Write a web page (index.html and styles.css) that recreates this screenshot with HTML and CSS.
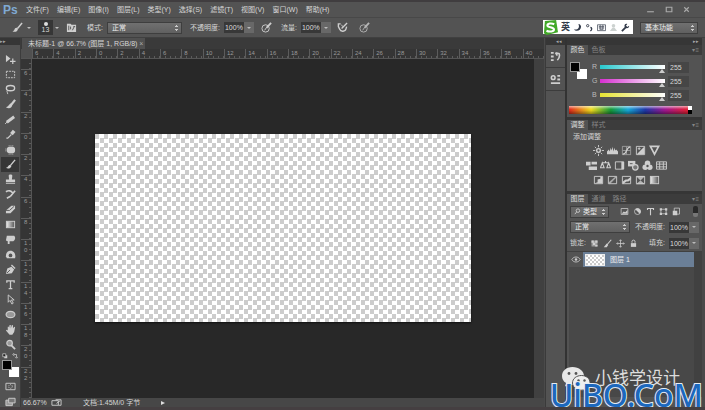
FILE: index.html
```html
<!DOCTYPE html>
<html lang="zh-CN">

<head>
    <meta charset="UTF-8">
    <meta name="viewport" content="width=device-width, initial-scale=1.0">
    <title>未标题-1 @ 66.7%</title>
    <link rel="stylesheet" href="styles.css">
</head>

<body>

    <header class="menubar">
        <span class="logo">Ps</span>
        <nav class="menus">
            <button>文件(F)</button>
            <button>编辑(E)</button>
            <button>图像(I)</button>
            <button>图层(L)</button>
            <button>类型(Y)</button>
            <button>选择(S)</button>
            <button>滤镜(T)</button>
            <button>视图(V)</button>
            <button>窗口(W)</button>
            <button>帮助(H)</button>
        </nav>
        <div class="window-buttons">
            <button aria-label="最小化"><svg viewBox="0 0 8 8"><path d="M1 6h6" /></svg></button>
            <button aria-label="最大化"><svg viewBox="0 0 8 8"><path d="M2 2h5v4H2z" /></svg></button>
            <button aria-label="关闭"><svg viewBox="0 0 8 8"><path d="M2 2l4 4M6 2L2 6" /></svg></button>
        </div>
    </header>

    <div class="options">
        <button class="current-tool" aria-label="画笔工具"><svg class="icon" viewBox="0 0 12 12"><path d="M11 1L6 7" stroke-width="1.6" /><path class="solid" d="M6 6.5c-2-.5-3 .5-3.400 2C2.300 9.500 1.500 10 .5 10c2 1.200 5.500 1 6-2.500z" /></svg><i class="arrow"></i></button>
        <button class="brush-size" aria-label="画笔大小"><i class="dot"></i>13</button>
        <i class="arrow"></i>
        <button class="brush-panel" aria-label="画笔面板"><svg class="icon" viewBox="0 0 12 12"><path class="solid" d="M1 2h4l1 1h5v8H1z" /><path class="cut" d="M3 4v5M5 5v3M7 9l2-4M8 5h2" /></svg></button>
        <label class="mode-label" for="mode">模式:</label>
        <select id="mode" class="mode">
            <option>正常</option>
        </select>
        <label for="opacity">不透明度:</label>
        <span class="number"><input id="opacity" value="100%"><button aria-label="不透明度滑块"><i class="arrow"></i></button></span>
        <button class="pressure" aria-label="压力不透明度"><svg class="icon" viewBox="0 0 12 12"><circle cx="5" cy="7" r="4" /><path d="M11 1L6 6.500" stroke-width="2" /><path d="M6 6L4 9" /></svg></button>
        <label for="flow">流量:</label>
        <span class="number"><input id="flow" value="100%"><button aria-label="流量滑块"><i class="arrow"></i></button></span>
        <button class="airbrush" aria-label="喷枪"><svg class="icon" viewBox="0 0 12 12"><path d="M4 2H1.500v3L3 8c1 3 6 3 7-1l.5-2M11 1L5 7" stroke-width="1.500" /><path d="M5 3l1 2" /></svg></button>
        <button class="airbrush" aria-label="压力大小"><svg class="icon dim" viewBox="0 0 12 12"><circle cx="5" cy="7" r="4" /><path d="M11 1L6 6.500" stroke-width="2" /><path d="M6 6L4 9" /></svg></button>
        <select class="workspace-select" aria-label="工作区">
            <option>基本功能</option>
        </select>

        <div class="ime">
            <svg class="ime-logo" viewBox="0 0 16 16"><path d="M2 1l12-1 2 13-12 3L1 14z" fill="#42a928" /><path d="M12 4.500C9 3 4.500 3.500 4.700 6c.2 2 6.800 1.500 7 4 .2 2.500-5 3-8 1.500" fill="none" stroke="#fff" stroke-width="2.200" /></svg>
            <span>英</span>
            <svg viewBox="0 0 10 10"><path d="M6 1c2 4-1 7-5 6 2 3 8 2 8-3 0-1-1-3-3-3z" fill="#333b4a" /></svg>
            <svg viewBox="0 0 10 10"><circle cx="3" cy="3" r="1.300" fill="none" stroke="#333b4a" /><path d="M6 5c2 0 2 2 0 4" fill="none" stroke="#333b4a" stroke-width="1.400" /></svg>
            <svg viewBox="0 0 10 10"><path d="M.5 2h9v6.500h-9zM2 4h6M2 5.500h6M3 7h4M3.500 2v5M6.500 2v5" fill="none" stroke="#4c5360" stroke-width=".9" /></svg>
            <svg viewBox="0 0 10 10"><circle cx="5" cy="3" r="2" fill="#ccd2d0" /><path d="M4 5h2l3 4H1z" fill="#ccd2d0" /></svg>
            <svg viewBox="0 0 10 10"><path d="M1 9l5-5" stroke="#333b4a" stroke-width="2" /><path d="M9 3L7 4.500 5.500 3 7 1C4 .5 3 3 4.500 5c2 1.500 5 .5 4.500-2z" fill="#333b4a" /></svg>
        </div>
    </div>

    <main class="workspace">

        <aside class="tools">
            <div class="grip">▸▸</div>
            <div class="tool-list">
                <button aria-label="移动"><svg class="icon" viewBox="0 0 12 12"><path class="solid" d="M1 1l5 4-5 4z" /><path d="M8.500 5v6M5.500 8h6" stroke-width="1.300" /></svg></button>
                <button aria-label="矩形选框"><svg class="icon" viewBox="0 0 12 12"><path d="M1.500 2.500h9v7h-9z" stroke-dasharray="2 1" /></svg></button>
                <button aria-label="套索"><svg class="icon" viewBox="0 0 12 12"><ellipse cx="6" cy="4.500" rx="4.500" ry="2.800" stroke-width="1.500" /><path d="M3 7c-2 1 0 2 0 4" /></svg></button>
                <button aria-label="快速选择"><svg class="icon" viewBox="0 0 12 12"><path d="M11 1L7 6" stroke-width="2.400" /><path class="solid" d="M7 5C4 5 5 8 1 9c3 2 7 1 7-3z" /></svg></button>
                <button aria-label="裁剪"><svg class="icon" viewBox="0 0 12 12"><path d="M2 9l8-6" stroke-width="3.200" /><path d="M0 11l3-3" /></svg></button>
                <button aria-label="吸管"><svg class="icon" viewBox="0 0 12 12"><path d="M10 2L7 5.500" stroke-width="3.800" /><path d="M7 6L3 10H1.500" stroke-width="1.300" /></svg></button>
                <button aria-label="修复画笔"><svg class="icon" viewBox="0 0 12 12"><rect class="solid" x="2" y="3" width="9" height="7" rx="3" /><path d="M1 5v4M4 2h5M4 11h5" stroke-dasharray="1 1" /></svg></button>
                <button class="active" aria-label="画笔"><svg class="icon" viewBox="0 0 12 12"><path d="M11 1L6 7" stroke-width="1.500" /><path class="solid" d="M6 6.500C3 6 4 9 1 9.500c2 1.500 5 1 6-2z" /></svg></button>
                <button aria-label="仿制图章"><svg class="icon" viewBox="0 0 12 12"><path class="solid" d="M4 2c0-2 4-2 4 0L7.500 6H11v3H1V6h3.500zM1 10h10v1H1z" /></svg></button>
                <button aria-label="历史记录画笔"><svg class="icon" viewBox="0 0 12 12"><path d="M1 3c3-2 6-1 7 1M11 2L6 8M6 8l-4 2" stroke-width="1.800" /></svg></button>
                <button aria-label="橡皮擦"><svg class="icon" viewBox="0 0 12 12"><path class="solid" d="M1 7l6-5h4v3L6 10H1z" /><path class="cut" d="M1 7h4l5-4.500" /></svg></button>
                <button aria-label="渐变"><svg class="icon" viewBox="0 0 12 12"><defs><linearGradient id="fade"><stop stop-color="#eee" /><stop offset="1" stop-color="#555" /></linearGradient></defs><rect x="1.500" y="2.500" width="9" height="7" fill="url(#fade)" /></svg></button>
                <button aria-label="涂抹"><svg class="icon" viewBox="0 0 12 12"><path class="solid" d="M2 2h8c2 2 1 5-1 6H5v3H3V8L1 7z" /></svg></button>
                <button aria-label="海绵"><svg class="icon" viewBox="0 0 12 12"><path class="solid" d="M1 8c0-5 3-6 5-6 4 0 6 4 5 8H2z" /><circle class="hole" cx="6" cy="7" r="2" /></svg></button>
                <button aria-label="钢笔"><svg class="icon" viewBox="0 0 12 12"><path class="solid" d="M1 11l1.500-6L7 3l3 3-2.500 4z" /><path d="M7 1l4 4" stroke-width="1.500" /><path class="cut" d="M2 10l3.500-3.500" /></svg></button>
                <button aria-label="文字"><svg class="icon" viewBox="0 0 12 12"><path d="M2 4V2h8v2M6 2v8M4 10.500h4" stroke-width="1.400" /></svg></button>
                <button aria-label="路径选择"><svg class="icon" viewBox="0 0 12 12"><path d="M3.500 1v8l2-2 2 4 1.500-1-2-3.500H10z" /></svg></button>
                <button aria-label="椭圆"><svg class="icon" viewBox="0 0 12 12"><ellipse cx="6" cy="6" rx="4.800" ry="3.500" fill="#999" stroke-width="1.300" /></svg></button>
                <button aria-label="抓手"><svg class="icon" viewBox="0 0 12 12"><path class="solid" d="M3 7V3h1.300v2L5 1h1.300v4L7.500 1l1.200.3V5l1.300-2 1 .6-1 5-2 3H5L1 7l1-.8z" /></svg></button>
                <button aria-label="缩放"><svg class="icon" viewBox="0 0 12 12"><circle cx="5" cy="4.500" r="3" fill="#999" stroke-width="1.300" /><path d="M7 7l4 4" stroke-width="2" /></svg></button>
            </div>
            <div class="swap">
                <svg class="icon" viewBox="0 0 8 8"><path class="solid" d="M3 3h4v4H3z" /><path d="M1 1h4v4H1z" fill="#222" /></svg>
                <svg class="icon" viewBox="0 0 8 8"><path d="M2 2h4v4M3 0L1 2l2 2M4 5l2 2 2-2" /></svg>
            </div>
            <div class="swatches"><i class="back"></i><i class="front"></i></div>
            <button class="mask" aria-label="快速蒙版"><svg class="icon" viewBox="0 0 12 12"><path d="M1 2.500h10v7H1z" /><circle cx="6" cy="6" r="2" stroke-dasharray="1 1" /></svg></button>
            <button class="mask" aria-label="屏幕模式"><svg class="icon" viewBox="0 0 12 12"><path d="M1 4.500h7v6H1z" fill="#999" /><path d="M4 2.500h7v5H4z" fill="#777" /></svg></button>
        </aside>

        <section class="document">
            <div class="tabs">
                <div class="tab">未标题-1 @ 66.7% (图层 1, RGB/8) <button aria-label="关闭文档">×</button></div>
            </div>
            <div class="ruler-row">
                <i class="corner"></i>
                <div class="ruler-x">
                    <span>6</span><span>4</span><span>2</span><span>0</span><span>2</span><span>4</span><span>6</span><span>8</span><span>10</span><span>12</span><span>14</span><span>16</span><span>18</span><span>20</span><span>22</span><span>24</span><span>26</span><span>28</span><span>30</span><span>32</span><span>34</span><span>36</span><span>38</span><span>40</span>
                </div>
            </div>
            <div class="view">
                <div class="ruler-y">
                    <span class="part"></span><span>6</span><span>4</span><span>2</span><span>0</span><span>2</span><span>4</span><span>6</span><span>8</span><span>1<br>0</span><span>1<br>2</span><span>1<br>4</span><span>1<br>6</span><span>1<br>8</span><span>2<br>0</span><span>2<br>2</span><span class="part"></span>
                </div>
                <div class="stage">
                    <div class="canvas"></div>
                </div>
                <div class="scroll"></div>
            </div>
            <footer class="status">
                <span class="zoom">66.67%</span>
                <svg class="icon" viewBox="0 0 12 8"><path d="M1 2h7v5H1zM5 1h6v6H8" /><path d="M6 5l4-3" /></svg>
                <span class="info">文档:1.45M/0 字节</span>
                <i class="play"></i>
            </footer>
        </section>

        <aside class="dock">
            <div class="grip">◂◂</div>
            <button aria-label="历史记录"><svg class="icon" viewBox="0 0 12 12"><path class="solid" d="M1 1h3v2H1zM1 5h3v2H1zM1 9h3v2H1z" /><path d="M6 2l4 1c1 3 0 5-2 7M6 2l2 3" stroke-width="1.700" /></svg></button>
            <button aria-label="属性"><svg class="icon" viewBox="0 0 12 12"><circle cx="3.500" cy="4" r="2" stroke-width="1.700" /><path class="solid" d="M8 1h3v2H8zM8 5h3v2H8zM1 9h10v2H1z" /></svg></button>
        </aside>

        <aside class="panels">
            <div class="grip">▸▸</div>

            <section class="panel color">
                <div class="panel-tabs"><button class="on">颜色</button><button>色板</button><i class="flyout">▾≡</i></div>
                <div class="color-body">
                    <div class="swatches"><i class="back"></i><i class="front"></i></div>
                    <div class="channels">
                        <div class="channel"><label for="red">R</label><input id="red" class="cyan" type="range" max="255" value="255"><input class="value" aria-label="R 值" value="255"></div>
                        <div class="channel"><label for="green">G</label><input id="green" class="magenta" type="range" max="255" value="255"><input class="value" aria-label="G 值" value="255"></div>
                        <div class="channel"><label for="blue">B</label><input id="blue" class="yellow" type="range" max="255" value="255"><input class="value" aria-label="B 值" value="255"></div>
                    </div>
                </div>
                <div class="spectrum"><i></i></div>
            </section>

            <section class="panel adjust">
                <div class="panel-tabs"><button class="on">调整</button><button>样式</button><i class="flyout">▾≡</i></div>
                <p>添加调整</p>
                <div class="adjust-row">
                    <svg class="icon" viewBox="0 0 12 12"><circle cx="6" cy="6" r="2" stroke-width="1.500" /><path d="M6 0v2.500M6 9.500V12M0 6h2.500M9.500 6H12M2 2l1.500 1.500M8.500 8.500L10 10M10 2L8.500 3.500M3.500 8.500L2 10" /></svg>
                    <svg class="icon" viewBox="0 0 12 12"><path class="solid" d="M0 10V7l2-2 1 2 1-4 1 3 1-4 1 5 1-4 1 3 1-1 2 2v3z" /></svg>
                    <svg class="icon" viewBox="0 0 12 12"><path d="M1.500 1.500h9v9h-9zM2 6h8M6 2v8" opacity=".6" /><path d="M2 10c5 0 3-7 8-8" stroke-width="1.300" /></svg>
                    <svg class="icon" viewBox="0 0 12 12"><path d="M1.500 1.500h9v9h-9z" /><path class="solid" d="M2 10l8-8v8z" /><path d="M3 4h3M4.500 2.500v3" /></svg>
                    <svg class="icon" viewBox="0 0 12 12"><path d="M1.500 1.500h9L6 10z" stroke-width="1.800" /></svg>
                </div>
                <div class="adjust-row">
                    <svg class="icon" viewBox="0 0 12 12"><path class="solid" d="M0 2h5v4H0zM6 2h6v3H6zM3 7h9v4H3z" /></svg>
                    <svg class="icon" viewBox="0 0 12 12"><path d="M2 3h8M6 1v2M2.500 3L.5 8.500h4zM9.500 3l-2 5.500h4z" stroke-width="1.200" /></svg>
                    <svg class="icon" viewBox="0 0 12 12"><path d="M1.500 2h9v8h-9z" /><path class="solid" d="M8 2h3v8H8z" /></svg>
                    <svg class="icon" viewBox="0 0 12 12"><path class="solid" d="M0 1h8v6H0z" /><circle cx="8" cy="8" r="3" fill="#777" stroke-width="1.300" /><path class="cut" d="M2 4h3" /></svg>
                    <svg class="icon" viewBox="0 0 12 12"><circle class="solid" cx="6" cy="3.500" r="3" /><circle class="solid" cx="3.500" cy="8" r="3" /><circle class="solid" cx="8.500" cy="8" r="3" /><circle class="hole" cx="6" cy="6.500" r="1.300" /></svg>
                    <svg class="icon" viewBox="0 0 12 12"><path d="M.5 2h11v8H.5zM.5 4.500h11M.5 7.500h11M4 2v8M8 2v8" /></svg>
                </div>
                <div class="adjust-row">
                    <svg class="icon" viewBox="0 0 12 12"><path d="M1.500 1.500h9v8h-9z" /><path class="solid" d="M2 9l3-1V5l3-1V2h2v7z" /></svg>
                    <svg class="icon" viewBox="0 0 12 12"><path d="M1.500 1.500h9v8h-9z" /><path class="solid" d="M2 8l7-6h2L3 10z" opacity=".7" /></svg>
                    <svg class="icon" viewBox="0 0 12 12"><path d="M1.500 1.500h9v8h-9z" /><path class="solid" d="M2 7l3-2h2l4-3v3L8 7H6l-4 3z" /></svg>
                    <svg class="icon" viewBox="0 0 12 12"><path d="M1.500 1.500h9v8h-9z" /><path class="solid" d="M1 1h10L6 6zM1 10l5-4 5 4z" opacity=".8" /></svg>
                    <svg class="icon" viewBox="0 0 12 12"><rect x="1.500" y="1.500" width="9" height="8" fill="url(#fade)" /></svg>
                </div>
            </section>

            <section class="panel layers">
                <div class="panel-tabs"><button class="on">图层</button><button>通道</button><button>路径</button><i class="flyout">▾≡</i></div>
                <div class="layer-row filter">
                    <span class="kind"><svg class="icon" viewBox="0 0 8 8"><circle cx="4.500" cy="3" r="2" /><path d="M3 4.500L1 7" /></svg><select aria-label="图层过滤">
                            <option>类型</option>
                        </select></span>
                    <div class="filter-icons">
                        <svg class="icon" viewBox="0 0 12 12"><path d="M1.500 2h9v8h-9z" /><path class="solid" d="M2 9l3-3 2 1 3-3v5z" /></svg>
                        <svg class="icon" viewBox="0 0 12 12"><circle cx="6" cy="6" r="4" /><path class="solid" d="M3 3a4 4 0 0 1 6 6z" /></svg>
                        <svg class="icon" viewBox="0 0 12 12"><path d="M2 4V2h8v2M6 2v9" stroke-width="1.500" /></svg>
                        <svg class="icon" viewBox="0 0 12 12"><path d="M2.500 3h7v6h-7z" /><path class="solid" d="M1 1.500h3v3H1zM8 1.500h3v3H8zM1 7.500h3v3H1zM8 7.500h3v3H8z" /></svg>
                        <svg class="icon" viewBox="0 0 12 12"><path d="M3 1.500h7v8H3z" /><path class="solid" d="M1 5h6v6H1z" /></svg>
                    </div>
                    <i class="switch"></i>
                </div>
                <div class="layer-row blend-row">
                    <select class="blend" aria-label="混合模式">
                        <option>正常</option>
                    </select>
                    <label for="layer-opacity">不透明度:</label>
                    <span class="number"><input id="layer-opacity" value="100%"><button aria-label="图层不透明度滑块"><i class="arrow"></i></button></span>
                </div>
                <div class="layer-row lock-row">
                    <span>锁定:</span>
                    <div class="lock-icons">
                        <svg class="icon" viewBox="0 0 12 12"><path class="solid" d="M2 2h8v8H2z" opacity=".6" /><path class="solid" d="M2 2h3v3H2zM7 2h3v3H7zM4 5h3v3H4zM7 8h3v2H7z" /></svg>
                        <svg class="icon" viewBox="0 0 12 12"><path d="M11 1L5 8" stroke-width="1.500" /><path class="solid" d="M5 6l2 2-2 3H1z" /></svg>
                        <svg class="icon" viewBox="0 0 12 12"><path d="M6 1v10M1 6h10M4.500 2.500L6 1l1.500 1.500M4.500 9.500L6 11l1.500-1.500M2.500 4.500L1 6l1.500 1.500M9.500 4.500L11 6 9.500 7.500" /></svg>
                        <svg class="icon" viewBox="0 0 12 12"><path class="solid" d="M2.500 5.500h7v5h-7z" /><path d="M4 5V3c0-2 4-2 4 0v2" stroke-width="1.300" /></svg>
                    </div>
                    <label for="fill">填充:</label>
                    <span class="number"><input id="fill" value="100%"><button aria-label="填充滑块"><i class="arrow"></i></button></span>
                </div>
                <div class="layer-list">
                    <div class="layer-items">
                        <div class="layer">
                            <svg class="icon eye" viewBox="0 0 12 12"><path d="M1 6c2-4 8-4 10 0-2 4-8 4-10 0z" /><circle class="solid" cx="6" cy="6" r="1.500" /></svg>
                            <i class="thumb"></i>
                            <span>图层 1</span>
                        </div>
                    </div>
                    <div class="list-scroll"></div>
                </div>
                <div class="panel-foot"></div>
            </section>
        </aside>
    </main>

    <div class="account">
        <svg viewBox="0 0 30 26"><path d="M11.500 1C5 1 1 5 1 10c0 3 1.500 5.500 4 7l-1 3.500L8 18.500c8 1 15-2 15-8.500 0-5-5-9-11.500-9z" fill="#e8e8e8" /><circle cx="8" cy="7.500" r="1.400" fill="#555" /><circle cx="15" cy="7.500" r="1.400" fill="#555" /><path d="M20.500 9.500c-5 0-9 3-9 7.500s5 8 11 7l3.500 1.500-1-3c2.500-1.500 4-3 4-6 0-4-4-7-8.500-7z" fill="#eee" stroke="#555" /><circle cx="17.500" cy="14.500" r="1.200" fill="#555" /><circle cx="23.500" cy="14.500" r="1.200" fill="#555" /></svg>
        <span>小钱学设计</span>
    </div>
    <div class="site">UiBQ.CoM</div>

</body>

</html>
```
FILE: styles.css
```css
* {
    box-sizing: border-box;
}

body,
html {
    height: 100%;
    margin: 0;
}

body {
    display: flex;
    flex-direction: column;
    position: relative;
    overflow: hidden;
    background: #535353;
    border-top: 2px solid #403d3f;
    border-bottom: 3px solid #453f41;
    color: #d6d6d6;
    font-family: "Liberation Sans", "Noto Sans CJK SC", sans-serif;
    font-size: 7px;
    line-height: 10px;
}

button,
input,
select {
    margin: 0;
    padding: 0;
    border: 0;
    border-radius: 0;
    background: none;
    color: inherit;
    font: inherit;
    appearance: none;
}

button {
    white-space: nowrap;
}

svg {
    display: block;
    flex: none;
}

.icon {
    width: 11px;
    height: 11px;
    fill: none;
    stroke: #cecece;
}

.icon .solid {
    fill: #cecece;
    stroke: none;
}

.icon .hole {
    fill: #535353;
    stroke: none;
}

.icon .cut {
    stroke: #535353;
}

.dim {
    opacity: 0.8;
}

.arrow {
    display: block;
    flex: none;
    border: 2px solid transparent;
    border-top-color: #bbb;
    border-bottom: 0;
}

select {
    height: 12px;
    padding: 0 4px;
    border: 1px solid #3e3e3e;
    /* two small triangles at the right end */
    background:
        conic-gradient(from 135deg at 50% 0, #ccc 90deg, transparent 0) right 3px top 2px / 3px 2px no-repeat,
        conic-gradient(from -45deg at 50% 100%, #ccc 90deg, transparent 0) right 3px bottom 2px / 3px 2px no-repeat,
        linear-gradient(#707070, #606060);
    color: #eee;
}

/* menu bar */

.menubar {
    display: flex;
    align-items: center;
    flex: none;
    height: 16px;
    padding: 0 14px 0 3px;
    border-bottom: 1px solid #484848;
}

.logo {
    width: 22px;
    color: #80aad4;
    font-size: 12px;
    font-weight: bold;
}

.menus {
    display: flex;
    flex: 1;
    gap: 8px;
    padding-left: 1px;
}

.window-buttons {
    display: flex;
    gap: 9px;
}

.window-buttons svg {
    width: 9px;
    height: 9px;
    fill: none;
    stroke: #aaa;
}

/* options bar */

.options {
    display: flex;
    align-items: center;
    flex: none;
    position: relative;
    height: 20px;
    padding: 0 7px 0 12px;
    border-bottom: 1px solid #404040;
}

.current-tool {
    display: flex;
    align-items: center;
    gap: 4px;
    margin-right: 7px;
}

.brush-size {
    width: 15px;
    height: 15px;
    margin-right: 2px;
    background: #363636;
    line-height: 7px;
}

.dot {
    display: block;
    width: 4px;
    height: 4px;
    margin: 0 auto;
    border-radius: 50%;
    background: #ddd;
}

.brush-panel {
    margin: 0 10px 0 7px;
}

.mode {
    width: 75px;
    margin: 0 8px 0 4px;
}

.number {
    display: flex;
    margin-left: 4px;
}

.number input {
    width: 20px;
    height: 11px;
    background: #383838;
    color: #ddd;
    text-align: center;
}

.number button {
    display: flex;
    align-items: center;
    justify-content: center;
    width: 10px;
    background: #686868;
}

.pressure {
    margin: 0 9px 0 7px;
}

.airbrush {
    margin-left: 6px;
    margin-right: 5px;
}

.workspace-select {
    width: 58px;
    margin-left: auto;
}

.ime {
    display: flex;
    align-items: center;
    justify-content: space-between;
    position: absolute;
    right: 72px;
    top: 2px;
    width: 90px;
    height: 14px;
    padding-right: 3px;
    background: #fff;
    color: #333b4a;
    font-size: 9px;
    font-weight: bold;
}

.ime svg {
    width: 9px;
    height: 9px;
}

.ime .ime-logo {
    width: 15px;
    height: 15px;
}

/* work area */

.workspace {
    display: flex;
    flex: 1;
    min-height: 0;
    padding-right: 3px;
    background: #4a4a4a;
}

.grip {
    flex: none;
    height: 7px;
    background: #363636;
    color: #aaa;
    font-size: 5px;
    line-height: 7px;
    text-align: right;
    padding-right: 3px;
}

.tools {
    display: flex;
    flex-direction: column;
    align-items: center;
    flex: none;
    width: 21px;
    background: #535353;
    border-right: 1px solid #3c3c3c;
}

.tools .grip {
    align-self: stretch;
    text-align: left;
}

.tool-list {
    display: flex;
    flex-direction: column;
    padding-top: 7px;
}

.tool-list button {
    display: flex;
    align-items: center;
    justify-content: center;
    width: 18px;
    height: 15px;
}

.tool-list .active {
    background: #363636;
}

.swap {
    display: flex;
    gap: 4px;
}

.swap .icon {
    width: 6px;
    height: 8px;
}

.swatches {
    display: grid;
    flex: none;
    width: 17px;
    height: 17px;
}

.swatches i {
    grid-area: 1 / 1;
    width: 10px;
    height: 10px;
}

.front {
    border: 1px solid #999;
    background: #000;
}

.back {
    align-self: end;
    justify-self: end;
    background: #fff;
}

.mask {
    margin-top: 4px;
}

/* document window */

.document {
    display: flex;
    flex-direction: column;
    flex: 1;
    min-width: 0;
    background: #3a3a3a;
}

.tabs {
    display: flex;
    flex: none;
    height: 11px;
    padding-left: 1px;
}

.tab {
    padding: 0 2px 0 6px;
    background: #505050;
    line-height: 11px;
    white-space: nowrap;
}

.tab button {
    color: #aaa;
}

.ruler-row {
    display: flex;
    flex: none;
    height: 10px;
    color: #999;
    border-bottom: 1px solid #555;
}

.corner {
    flex: none;
    width: 11px;
    background: #505050;
}

.ruler-x {
    display: flex;
    flex: 1;
    background: #353535;
}

.ruler-x span {
    flex: 1;
    min-width: 0;
    padding-left: 2px;
    border-left: 1px solid #5c5c5c;
    font-size: 6px;
    line-height: 8px;
    /* minor ticks */
    background: repeating-linear-gradient(90deg, transparent 0 4px, #5c5c5c 4px 5px) bottom / 100% 2px no-repeat;
}

.view {
    display: flex;
    flex: 1;
    min-height: 0;
}

.ruler-y {
    display: flex;
    flex-direction: column;
    flex: none;
    width: 11px;
    background: #353535;
    border-right: 1px solid #555;
    color: #999;
}

.ruler-y span {
    flex: 1;
    min-height: 0;
    padding-left: 3px;
    border-top: 1px solid #5c5c5c;
    font-size: 6px;
    line-height: 7px;
    background: repeating-linear-gradient(transparent 0 4px, #5c5c5c 4px 5px) right / 2px 100% no-repeat;
}

.ruler-y .part {
    flex: none;
    height: 10px;
    border-top: 0;
}

.stage {
    flex: 1;
    padding: 75px 0 0 63px;
    background: #282828;
}

.canvas {
    width: 376px;
    max-width: 100%;
    aspect-ratio: 2 / 1;
    background: repeating-conic-gradient(#fff 0 25%, #ccc 0 50%) 0 0 / 9px 9px;
    box-shadow: 0 1px 2px #111;
}

.scroll {
    flex: none;
    width: 10px;
    background: #404040;
}

.status {
    display: flex;
    align-items: center;
    flex: none;
    height: 9px;
    padding-left: 2px;
    background: #474747;
    line-height: 9px;
}

.zoom {
    width: 28px;
}

.info {
    margin: 0 21px;
}

.play {
    border: 2px solid transparent;
    border-left: 4px solid #ddd;
    border-right: 0;
}

/* collapsed dock */

.dock {
    flex: none;
    width: 22px;
    margin-left: 1px;
    background: #535353;
    border-right: 2px solid #333;
    border-left: 1px solid #3a3a3a;
}

.dock button {
    display: flex;
    align-items: center;
    justify-content: center;
    width: 100%;
    height: 23px;
    border-bottom: 1px solid #3c3c3c;
}

/* panels */

.panels {
    display: flex;
    flex-direction: column;
    flex: none;
    width: 135px;
}

.panel {
    flex: none;
    margin-bottom: 3px;
    background: #535353;
    box-shadow: 0 3px #363636;
}

.panel-tabs {
    display: flex;
    height: 10px;
    background: #3c3c3c;
    color: #858585;
}

.panel-tabs button {
    width: 21px;
    line-height: 10px;
}

.panel-tabs .on {
    background: #535353;
    color: #ddd;
}

.flyout {
    margin-left: auto;
    padding-right: 3px;
    font-style: normal;
    font-size: 6px;
}

.color {
    height: 72px;
}

.color-body {
    display: flex;
    gap: 5px;
    padding: 5px 13px 0 3px;
}

.color-body .swatches {
    margin-top: 2px;
}

.channels {
    flex: 1;
    min-width: 0;
}

.channel {
    display: flex;
    align-items: center;
    gap: 3px;
    height: 14px;
}

.channel label {
    flex: none;
    width: 5px;
    color: #bbb;
}

.channel input[type="range"] {
    flex: 1;
    min-width: 0;
    height: 4px;
}

.channel input::-webkit-slider-thumb {
    appearance: none;
    width: 6px;
    height: 4px;
    margin-top: 8px;
    background: #ccc;
    clip-path: polygon(50% 0, 100% 100%, 0 100%);
}

.cyan {
    background: linear-gradient(90deg, #28c9cf, #fff);
}

.magenta {
    background: linear-gradient(90deg, #d62fd0, #fff);
}

.yellow {
    background: linear-gradient(90deg, #e6e332, #fff);
}

.channel .value {
    flex: none;
    width: 21px;
    height: 11px;
    padding-left: 2px;
    background: #464646;
}

.spectrum {
    display: flex;
    justify-content: flex-end;
    height: 8px;
    margin: 4px 10px 0 2px;
    background:
        linear-gradient(#fff9, transparent 40%, #0000 50%, #0006),
        linear-gradient(90deg, #e0281c, #f0dc20 18%, #159a3a 34%, #18a8d8 48%, #2038a8 62%, #a01890 78%, #e0203c 95%);
}

.spectrum i {
    width: 4px;
    background: linear-gradient(#fff 50%, #000 50%);
}

.adjust {
    height: 71px;
}

.adjust p {
    margin: 0;
    padding: 2px 0 4px 6px;
    line-height: 9px;
}

.adjust-row {
    display: flex;
    justify-content: center;
    gap: 3px;
    height: 15px;
    padding: 0 17px 0 0;
}

.layers {
    display: flex;
    flex-direction: column;
    flex: 1;
    min-height: 0;
    margin-bottom: 0;
    box-shadow: none;
}

.layer-row {
    display: flex;
    align-items: center;
    flex: none;
    height: 15px;
    padding: 0 3px;
}

.kind {
    display: flex;
    align-items: center;
    width: 39px;
    padding-left: 3px;
    border: 1px solid #3e3e3e;
    background: #666;
}

.kind .icon {
    width: 7px;
    height: 7px;
}

.kind select {
    flex: 1;
    height: 10px;
    padding: 0 2px;
    border: 0;
    background-color: transparent;
}

.filter-icons {
    display: flex;
    flex: 1;
    gap: 4px;
    padding-left: 11px;
}

.filter-icons .icon,
.lock-icons .icon {
    width: 9px;
    height: 9px;
}

.switch {
    width: 5px;
    height: 11px;
    margin-right: 1px;
    border-radius: 2px;
    background: linear-gradient(#292929 60%, #777 60%);
}

.blend-row {
    height: 16px;
}

.blend {
    flex: 1;
    margin-right: 5px;
}

.layer-row .number {
    margin-left: 4px;
}

.lock-row {
    height: 16px;
}

.lock-icons {
    display: flex;
    flex: 1;
    gap: 4px;
    padding-left: 4px;
}

.layer-list {
    display: flex;
    flex: 1;
    min-height: 0;
    padding-left: 2px;
    border-top: 1px solid #404040;
}

.layer-items {
    flex: 1;
    background: #484848;
}

.layer {
    display: flex;
    align-items: center;
    height: 15px;
    background: #6b7f97;
    color: #eee;
}

.eye {
    width: 14px;
    height: 15px;
    padding: 0 2px;
    background: #535353;
}

.thumb {
    width: 20px;
    height: 12px;
    margin: 0 5px 0 2px;
    border: 1px solid #eee;
    background: repeating-conic-gradient(#fff 0 25%, #ccc 0 50%) 0 0 / 4px 4px;
}

.list-scroll {
    flex: none;
    width: 8px;
    background: #414141;
}

.panel-foot {
    flex: none;
    height: 10px;
    background: #535353;
}

/* marks lying over the lower right corner */

.account {
    display: flex;
    align-items: center;
    gap: 4px;
    position: absolute;
    right: 25px;
    bottom: 15px;
    color: #ddd;
    font-size: 17px;
    line-height: 26px;
}

.account svg {
    width: 30px;
    height: 26px;
}

.site {
    position: absolute;
    right: 2px;
    bottom: -3px;
    color: #1c68bd;
    font-family: "Noto Sans", sans-serif;
    font-size: 32px;
    font-weight: 500;
    line-height: 30px;
    -webkit-text-stroke: 2px #e4ecf5;
    paint-order: stroke fill;
}
```
